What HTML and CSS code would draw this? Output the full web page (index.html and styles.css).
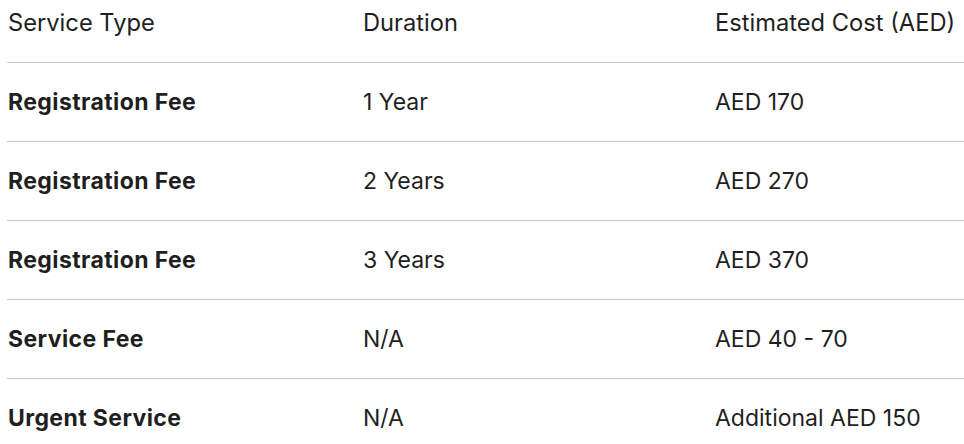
FILE: index.html
```html
<!DOCTYPE html>
<html lang="en">
<head>
<meta charset="utf-8">
<title>Service Fees</title>
<link rel="stylesheet" href="styles.css">
</head>
<body>
<table class="fees">
  <thead>
    <tr>
      <th>Service Type</th>
      <th>Duration</th>
      <th>Estimated Cost (AED)</th>
    </tr>
  </thead>
  <tbody>
    <tr><td class="name">Registration Fee</td><td>1 Year</td><td>AED 170</td></tr>
    <tr><td class="name">Registration Fee</td><td>2 Years</td><td>AED 270</td></tr>
    <tr><td class="name">Registration Fee</td><td>3 Years</td><td>AED 370</td></tr>
    <tr><td class="name">Service Fee</td><td>N/A</td><td>AED 40 - 70</td></tr>
    <tr><td class="name">Urgent Service</td><td>N/A</td><td>Additional AED 150</td></tr>
  </tbody>
</table>
</body>
</html>
```
FILE: styles.css
```css
html, body {
  margin: 0;
  padding: 0;
  background: #ffffff;
}
body {
  font-family: Inter, "Liberation Sans", sans-serif;
  color: #1f1f1f;
  overflow: hidden;
}
.fees {
  margin-left: 7px;
  width: 957px;
  border-collapse: collapse;
  table-layout: fixed;
  font-size: 23px;
}
.fees th:nth-child(1), .fees td:nth-child(1) { width: 355px; }
.fees th:nth-child(2), .fees td:nth-child(2) { width: 352px; }
.fees th {
  text-align: left;
  font-weight: 400;
  font-size: 23.7px;
  height: 62px;
  box-sizing: border-box;
  padding: 8px 0 24px 1px;
  line-height: 30px;
  vertical-align: top;
  border-bottom: 1px solid #c7c7c7;
}
.fees td {
  height: 78px;
  padding: 0 0 0 1px;
  line-height: 30px;
  vertical-align: middle;
  border-bottom: 1px solid #c7c7c7;
}
.fees td.name {
  font-weight: 700;
  letter-spacing: 0.4px;
}
```
